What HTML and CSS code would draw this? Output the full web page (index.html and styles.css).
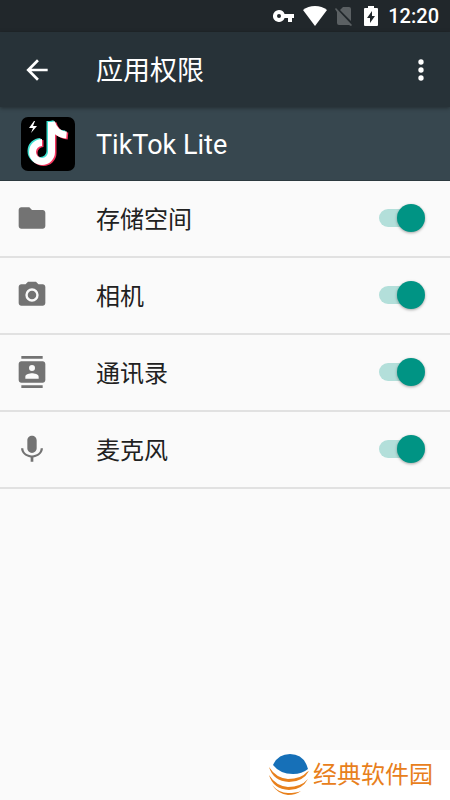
FILE: index.html
```html
<!DOCTYPE html>
<html lang="zh-CN">
<head>
<meta charset="utf-8">
<meta name="viewport" content="width=device-width, initial-scale=1">
<title>应用权限</title>
<link rel="stylesheet" href="styles.css">
</head>
<body>
<div class="status">
  <svg class="key" viewBox="0 0 22 12"><path fill-rule="evenodd" d="M6 0a6 6 0 1 0 5.600 8H15v4h4V8h2V4H11.600A6 6 0 0 0 6 0zm0 4a2 2 0 1 1 0 4 2 2 0 0 1 0-4z"/></svg>
  <svg class="wifi" viewBox="0 0 24 20"><path d="M12 20 0 4Q5 0 12 0t12 4z"/></svg>
  <svg class="sim" viewBox="0 0 18 20"><path d="M16 3a2 2 0 0 0-2-2H8L5 4l11 11zM1 2 0 3l2 3v11a2 2 0 0 0 2 2h10l2 1 1-1z"/></svg>
  <svg class="battery" viewBox="0 0 14 20"><path fill-rule="evenodd" d="M4 0h6v2h3q1 0 1 1v16q0 1-1 1H1q-1 0-1-1V3q0-1 1-1h3zm4 5-5 7h3v5l5-7H8z"/></svg>
  <span class="clock">12:20</span>
</div>
<header class="bar">
  <button class="icon-button" aria-label="返回"><svg class="icon" viewBox="0 0 24 24"><path d="M20 11H7.830l5.590-5.590L12 4l-8 8 8 8 1.410-1.410L7.830 13H20z"/></svg></button>
  <h1 class="title">应用权限</h1>
  <button class="icon-button" aria-label="更多选项"><svg class="icon" viewBox="0 0 24 24"><circle cx="12" cy="6" r="2"/><circle cx="12" cy="12" r="2"/><circle cx="12" cy="18" r="2"/></svg></button>
</header>
<section class="app">
  <svg class="app-icon" viewBox="0 0 54 54">
    <rect width="54" height="54" rx="7" fill="#000"/>
    <path class="bolt" d="m13 4-5 7h4l-2 5 6-7h-4l2-5z"/>
    <g class="note">
      <path stroke="#3fe0d0" d="M29 4v30a9.500 9.500 0 1 1-9.500-9.500M29 4q3 12 15 13"/>
      <path stroke="#f2365e" d="M32 6v30a9.500 9.500 0 1 1-9.500-9.500M32 6q3 12 15 13"/>
      <path stroke="#fff" d="M30.500 5v30a9.500 9.500 0 1 1-9.500-9.500M30.500 5q3 12 15 13"/>
    </g>
  </svg>
  <h2 class="app-name">TikTok Lite</h2>
</section>
<main class="list">
  <label class="row">
    <svg class="icon" viewBox="0 0 24 24"><path d="M10 4H4c-1.100 0-2 .9-2 2v12c0 1.100.9 2 2 2h16c1.100 0 2-.9 2-2V8c0-1.100-.9-2-2-2h-8z"/></svg>
    <span class="label">存储空间</span>
    <input class="switch" type="checkbox" role="switch" checked>
  </label>
  <label class="row">
    <svg class="icon" viewBox="0 0 24 24"><circle cx="12" cy="12" r="3.200"/><path d="M9 2 7.170 4H4c-1.100 0-2 .9-2 2v12c0 1.100.9 2 2 2h16c1.100 0 2-.9 2-2V6c0-1.100-.9-2-2-2h-3.170L15 2zm3 15a5 5 0 1 1 0-10 5 5 0 0 1 0 10z"/></svg>
    <span class="label">相机</span>
    <input class="switch" type="checkbox" role="switch" checked>
  </label>
  <label class="row">
    <svg class="icon" viewBox="0 0 24 24"><path d="M20 0H4v2h16zM4 24h16v-2H4zM20 4H4c-1.100 0-2 .9-2 2v12c0 1.100.9 2 2 2h16c1.100 0 2-.9 2-2V6c0-1.100-.9-2-2-2zm-8 2.750a2.250 2.250 0 1 1 0 4.500 2.250 2.250 0 0 1 0-4.500zM17 17H7v-1.500c0-1.670 3.330-2.500 5-2.500s5 .83 5 2.500z"/></svg>
    <span class="label">通讯录</span>
    <input class="switch" type="checkbox" role="switch" checked>
  </label>
  <label class="row">
    <svg class="icon" viewBox="0 0 24 24"><path d="M12 15c1.930 0 3.500-1.570 3.500-3.500v-6C15.500 3.570 13.930 2 12 2S8.500 3.570 8.500 5.500v6c0 1.930 1.570 3.500 3.500 3.500zm6.500-3.500c0 3.300-3 5.300-6.500 5.300s-6.500-2-6.500-5.300H3.800c0 3.610 3.200 6.330 7.200 6.820V21.500h2v-3.180c4-.49 7.200-3.210 7.200-6.820z"/></svg>
    <span class="label">麦克风</span>
    <input class="switch" type="checkbox" role="switch" checked>
  </label>
</main>
<footer class="brand">
  <svg class="brand-logo" viewBox="0 0 42 42">
    <path fill="#1670b8" d="M5 11Q10 0 22 0q14 0 18 15-6 5-15 5-13 0-20-9z"/>
    <path fill="#e8801c" d="M1 13q7 11 19 12 13 0 19-7l2-1q-6 11-20 11Q5 27 1 13z"/>
    <path fill="#e8801c" d="M1 21q7 11 19 12 13 0 20-8-6 11-19 11Q5 35 1 21z"/>
    <path fill="#e8801c" d="M4 31q7 8 16 8 8 0 13-2-5 4-13 4-10-1-16-10z"/>
  </svg>
  <span>经典软件园</span>
</footer>
</body>
</html>
```
FILE: styles.css
```css
* { box-sizing: border-box; }

body {
  margin: 0;
  min-height: 100vh;
  display: flex;
  flex-direction: column;
  background: #fafafa;
  color: #212121;
  font-family: Roboto, "Noto Sans CJK SC", sans-serif;
}

svg { display: block; flex: none; fill: currentColor; }

.status {
  height: 32px;
  padding-right: 11px;
  display: flex;
  align-items: center;
  justify-content: flex-end;
  background: #21272b;
  color: #fff;
}
.key { width: 22px; height: 12px; margin-right: 8px; }
.wifi { width: 24px; height: 20px; margin-right: 8px; }
.sim { width: 18px; height: 20px; margin-right: 11px; color: #5b6063; }
.battery { width: 14px; height: 20px; margin-right: 10px; }
.clock { font-size: 20px; line-height: 32px; font-weight: 500; }

.bar {
  position: relative;
  height: 75px;
  padding: 0 13px 0 21px;
  display: flex;
  align-items: center;
  background: #273238;
  color: #fff;
  box-shadow: 0 1px 4px rgba(0, 0, 0, .4);
}
.icon-button { padding: 0; border: 0; background: none; color: inherit; }
.icon { width: 32px; height: 32px; }
.title,
.app-name,
.label { padding-top: 3px; line-height: 36px; font-weight: 400; }
.title { flex: 1; margin: 0 0 0 43px; font-size: 27px; }

.app {
  padding: 0 21px;
  height: 74px;
  display: flex;
  align-items: center;
  gap: 21px;
  background: #37474f;
  color: #fff;
  border-bottom: 1px solid #2c393f;
}
.app-icon { width: 54px; height: 54px; }
.bolt { fill: #fff; }
.note { fill: none; stroke-width: 7; }
.app-name { margin: 0; font-size: 27px; }

.row {
  height: 77px;
  padding: 0 25px 2px 16px;
  display: flex;
  align-items: center;
  border-bottom: 2px solid #e1e1e1;
}
.row .icon { color: #737373; }
.label { flex: 1; margin-left: 48px; padding-top: 5px; font-size: 24px; }

.switch {
  appearance: none;
  position: relative;
  width: 46px;
  height: 28px;
  margin: 0;
}
.switch::before {
  content: "";
  position: absolute;
  inset: 5px 4px 5px 0;
  border-radius: 9px;
  background: #b3dfda;
}
.switch::after {
  content: "";
  position: absolute;
  top: 0;
  right: 0;
  width: 28px;
  height: 28px;
  border-radius: 50%;
  background: #009484;
  box-shadow: 0 1px 3px rgba(0, 0, 0, .35);
}

.brand {
  align-self: flex-end;
  margin-top: auto;
  width: 200px;
  height: 50px;
  padding: 0 16px 0 18px;
  display: flex;
  align-items: center;
  gap: 3px;
  background: #fff;
  color: #e8801c;
  font-size: 24px;
  line-height: 36px;
  white-space: nowrap;
}
.brand-logo { width: 42px; height: 42px; }
```
